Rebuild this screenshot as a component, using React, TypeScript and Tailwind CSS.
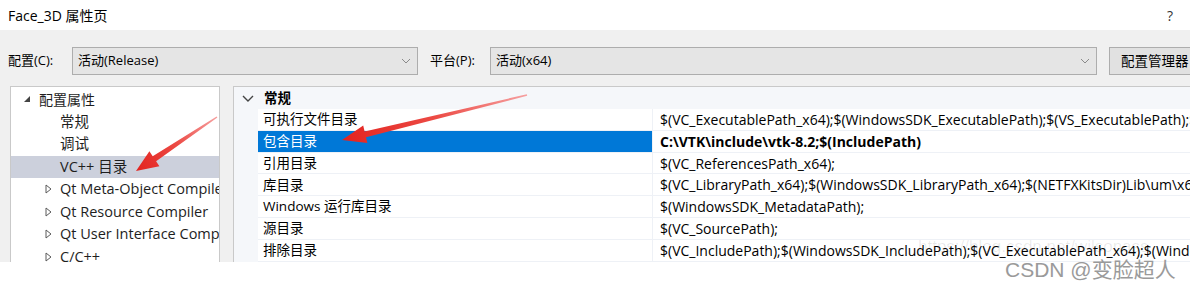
import React from 'react'

const font = { fontFamily: '"Open Sans", "Noto Sans CJK SC", sans-serif' }

const treeItems = [
  { label: '常规', kind: 'leaf' },
  { label: '调试', kind: 'leaf' },
  { label: 'VC++ 目录', kind: 'leaf', selected: true },
  { label: 'Qt Meta-Object Compiler', kind: 'closed' },
  { label: 'Qt Resource Compiler', kind: 'closed' },
  { label: 'Qt User Interface Compiler', kind: 'closed' },
  { label: 'C/C++', kind: 'closed' },
  { label: '链接器', kind: 'closed' },
]

const rows = [
  { name: '可执行文件目录', value: '$(VC_ExecutablePath_x64);$(WindowsSDK_ExecutablePath);$(VS_ExecutablePath);$(MSBuild_ExecutablePath);$(FxCopDir);$(PATH);' },
  { name: '包含目录', value: 'C:\\VTK\\include\\vtk-8.2;$(IncludePath)', selected: true },
  { name: '引用目录', value: '$(VC_ReferencesPath_x64);' },
  { name: '库目录', value: '$(VC_LibraryPath_x64);$(WindowsSDK_LibraryPath_x64);$(NETFXKitsDir)Lib\\um\\x64' },
  { name: 'Windows 运行库目录', value: '$(WindowsSDK_MetadataPath);' },
  { name: '源目录', value: '$(VC_SourcePath);' },
  { name: '排除目录', value: '$(VC_IncludePath);$(WindowsSDK_IncludePath);$(VC_ExecutablePath_x64);$(WindowsSDK_ExecutablePath);' },
]

function ComboArrow() {
  return (
    <svg width="10" height="6" viewBox="0 0 10 6" className="shrink-0">
      <polyline points="1,1 5,5 9,1" fill="none" stroke="#8a8a8a" strokeWidth="1" />
    </svg>
  )
}

function Combo({ value, width }: { value: string; width: string }) {
  return (
    <div className={`${width} h-[28px] flex items-center justify-between border border-[#adadad] bg-[#e5e5e5] pl-[5px] pr-[6px] shrink-0`}>
      <span className="text-[13px] text-black">{value}</span>
      <ComboArrow />
    </div>
  )
}

function TreeItem({ label, kind, selected }: { label: string; kind: string; selected?: boolean }) {
  return (
    <div className={`h-[22.5px] flex items-center pl-[34px] ${selected ? 'bg-[#ccd0dc]' : ''}`}>
      <span className="w-[15px] flex items-center shrink-0">
        {kind === 'closed' && (
          <svg width="7" height="10" viewBox="0 0 7 10">
            <polygon points="1,1 6,5 1,9" fill="none" stroke="#5a5a5a" strokeWidth="1" />
          </svg>
        )}
      </span>
      <span className="whitespace-nowrap text-[14.5px] text-[#1e1e1e]">{label}</span>
    </div>
  )
}

function Arrow({ points, id, x1, y1, x2, y2 }: { points: string; id: string; x1: number; y1: number; x2: number; y2: number }) {
  return (
    <>
      <defs>
        <linearGradient id={id} gradientUnits="userSpaceOnUse" x1={x1} y1={y1} x2={x2} y2={y2}>
          <stop offset="0" stopColor="#f6a0a0" />
          <stop offset="0.5" stopColor="#ec4a44" />
          <stop offset="1" stopColor="#e3231f" />
        </linearGradient>
      </defs>
      <polygon points={points} fill={`url(#${id})`} />
    </>
  )
}

export default function App() {
  return (
    <div className="relative w-[1197px] h-[289px] bg-white overflow-hidden" style={font}>
      {/* title bar */}
      <div className="h-[30px] flex items-center justify-between pl-[8px] pr-[24px]">
        <span className="text-[14px] text-black">Face_3D 属性页</span>
        <span className="text-[14px] text-[#333]">?</span>
      </div>

      <div className="w-[1190px] h-[232px] bg-[#f0f0f0] overflow-hidden">
        {/* toolbar */}
        <div className="h-[56px] flex items-start pt-[17px] pl-[8px]">
          <span className="w-[64px] h-[28px] flex items-center text-[13px] text-black shrink-0">配置(C):</span>
          <Combo value="活动(Release)" width="w-[346px]" />
          <span className="w-[72px] h-[28px] flex items-center pl-[12px] text-[13px] text-black shrink-0">平台(P):</span>
          <Combo value="活动(x64)" width="w-[607px]" />
          <div className="ml-[12px] w-[92px] h-[28px] flex items-center pl-[11px] border border-[#adadad] bg-[#e1e1e1] shrink-0 text-[13.5px] text-black whitespace-nowrap">
            配置管理器
          </div>
        </div>

        {/* panels */}
        <div className="flex items-start pl-[10px] gap-[13px]">
          <div className="w-[210px] h-[200px] bg-white border border-[#c9c9c9] pt-[1px] overflow-hidden shrink-0">
            <div className="h-[22.5px] flex items-center pl-[13px]">
              <span className="w-[15px] flex items-center shrink-0">
                <svg width="7" height="7" viewBox="0 0 7 7">
                  <polygon points="6,0 6,6 0,6" fill="#444" />
                </svg>
              </span>
              <span className="text-[14px] text-[#1e1e1e]">配置属性</span>
            </div>
            {treeItems.map((t) => (
              <TreeItem key={t.label} {...t} />
            ))}
          </div>

          <div className="flex-1 h-[200px] border-t border-l border-[#c9c9c9] bg-[#f5f7fa] overflow-hidden">
            <div className="h-[22px] flex items-center pl-[8px]">
              <svg width="12" height="7" viewBox="0 0 12 7" className="mr-[10px]">
                <polyline points="1,1 6,6 11,1" fill="none" stroke="#444" strokeWidth="1.4" />
              </svg>
              <span className="text-[13.5px] font-bold text-black">常规</span>
            </div>
            {rows.map((r) => (
              <div key={r.name} className="h-[21.8px] flex ml-[24px] border-b border-[#eef1f6]">
                <div className={`w-[394px] shrink-0 flex items-center pl-[5px] text-[13.5px] ${r.selected ? 'bg-[#0078d7] text-white' : 'bg-white text-black'}`}>
                  {r.name}
                </div>
                <div className={`flex-1 flex items-center pl-[7px] bg-white border-l border-[#eef1f6] whitespace-nowrap overflow-hidden text-[14px] text-black ${r.selected ? 'font-bold' : ''}`}>
                  {r.value}
                </div>
              </div>
            ))}
          </div>
        </div>
      </div>

      {/* watermarks */}
      <div className="absolute left-[918px] top-[234px] text-[17px] text-black/[0.09] whitespace-nowrap" style={{ fontFamily: '"Liberation Sans", sans-serif' }}>
        https://blog.csdn.net/wilsonass
      </div>
      <div className="absolute left-[1005px] top-[254px] text-[21px] text-[#9a9a9a] whitespace-nowrap" style={{ fontFamily: '"Liberation Sans", "Noto Sans CJK SC", sans-serif' }}>
        CSDN @变脸超人
      </div>

      {/* annotation arrows */}
      <svg className="absolute left-0 top-0 pointer-events-none" width="1197" height="289">
        <Arrow
          id="a1"
          x1={217}
          y1={117}
          x2={136}
          y2={171}
          points="216.6,116.4 152.7,156.2 149.4,151.2 136,171 159.4,166.2 156.1,161.2 217.4,117.6"
        />
        <Arrow
          id="a2"
          x1={527}
          y1={95}
          x2={342}
          y2={140}
          points="526.8,94.3 364.6,131.4 363.2,125.6 342,140 367.4,143 366,137.2 527.2,95.7"
        />
      </svg>
    </div>
  )
}
